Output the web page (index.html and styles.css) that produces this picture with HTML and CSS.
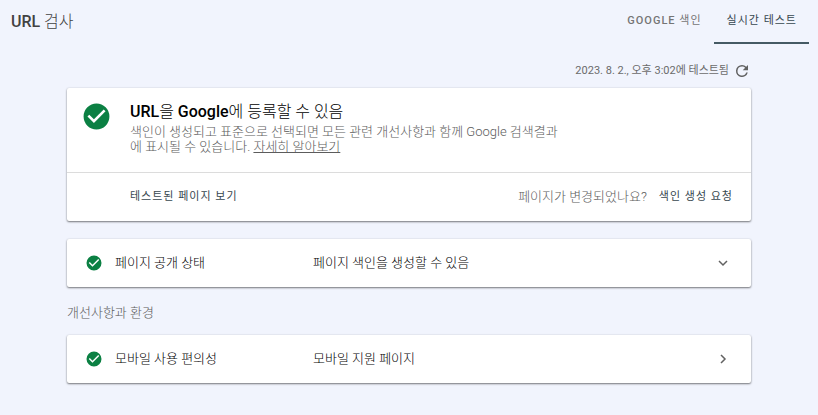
FILE: index.html
```html
<!DOCTYPE html>
<html lang="ko">
<head>
<meta charset="utf-8">
<title>URL 검사</title>
<link rel="stylesheet" href="styles.css">
</head>
<body>
<header class="topbar">
  <h1 class="page-title"><b class="latin">URL</b> 검사</h1>
  <nav class="tabs">
    <a class="tab" href="#index"><b class="latin">GOOGLE</b> 색인</a>
    <a class="tab tab-active" href="#live" aria-current="page">실시간 테스트</a>
  </nav>
</header>
<main class="content">
  <div class="tested">
    <span>2023. 8. 2., 오후 3:02에 테스트됨</span>
    <button class="icon-button" type="button" aria-label="다시 테스트">
      <svg class="refresh" viewBox="0 0 24 24"><path d="M17.65 6.35A7.96 7.96 0 0 0 12 4a8 8 0 1 0 7.73 10h-2.08A6 6 0 1 1 12 6c1.66 0 3.14.69 4.22 1.78L13 11h7V4z"/></svg>
    </button>
  </div>
  <section class="card">
    <div class="verdict">
      <svg class="check check-large" viewBox="0 0 24 24"><path d="M12 2a10 10 0 1 0 0 20 10 10 0 0 0 0-20zm-2 15-5-5 1.410-1.410L10 14.170l7.590-7.590L19 8z"/></svg>
      <div class="verdict-text">
        <h2 class="verdict-title"><b class="latin">URL</b>을 <b class="latin">Google</b>에 등록할 수 있음</h2>
        <p class="verdict-detail">색인이 생성되고 표준으로 선택되면 모든 관련 개선사항과 함께 Google 검색결과에 표시될 수 있습니다. <a class="more" href="#more">자세히 알아보기</a></p>
      </div>
    </div>
    <div class="actions">
      <button class="action" type="button">테스트된 페이지 보기</button>
      <span class="question">페이지가 변경되었나요?</span>
      <button class="action" type="button">색인 생성 요청</button>
    </div>
  </section>
  <button class="card row" type="button" aria-expanded="false">
    <svg class="check" viewBox="0 0 24 24"><path d="M12 2a10 10 0 1 0 0 20 10 10 0 0 0 0-20zm-2 15-5-5 1.410-1.410L10 14.170l7.590-7.590L19 8z"/></svg>
    <span class="row-name">페이지 공개 상태</span>
    <span class="row-value">페이지 색인을 생성할 수 있음</span>
    <svg class="chevron" viewBox="0 0 16 16"><path d="M4 6l4 4 4-4"/></svg>
  </button>
  <h3 class="group-title">개선사항과 환경</h3>
  <button class="card row" type="button">
    <svg class="check" viewBox="0 0 24 24"><path d="M12 2a10 10 0 1 0 0 20 10 10 0 0 0 0-20zm-2 15-5-5 1.410-1.410L10 14.170l7.590-7.590L19 8z"/></svg>
    <span class="row-name">모바일 사용 편의성</span>
    <span class="row-value">모바일 지원 페이지</span>
    <svg class="chevron" viewBox="0 0 16 16"><path d="M6 4l4 4-4 4"/></svg>
  </button>
</main>
</body>
</html>
```
FILE: styles.css
```css
* {
  box-sizing: border-box;
}

body {
  margin: 0;
  background: #f1f4fd;
  color: #000;
  font-family: Roboto, "Noto Sans CJK KR", sans-serif;
  font-size: 13px;
  font-weight: 300;
  line-height: 16px;
}

h1, h2, h3, p {
  margin: 0;
}

button {
  padding: 0;
  border: 0;
  background: none;
  color: inherit;
  font: inherit;
  text-align: left;
}

.latin {
  font-weight: 500;
}

.topbar {
  display: flex;
  justify-content: space-between;
  height: 44px;
  padding: 0 9px 0 11px;
}

.page-title {
  color: #424242;
  font-size: 16px;
  font-weight: 300;
  line-height: 44px;
}

.tabs {
  display: flex;
}

.tab {
  padding: 0 12px 0 13px;
  border-bottom: 2px solid transparent;
  color: #757575;
  font-size: 11px;
  font-weight: 400;
  letter-spacing: 1px;
  line-height: 42px;
  text-decoration: none;
}

.tab-active {
  border-color: #455a64;
  color: #37474f;
}

.content {
  padding: 18px 67px 24px;
}

.tested {
  display: flex;
  align-items: center;
  justify-content: flex-end;
  gap: 4px;
  height: 18px;
  margin-bottom: 8px;
  color: #6b6b6b;
  font-size: 11px;
  font-weight: 400;
}

.icon-button {
  display: flex;
}

.refresh {
  width: 18px;
  height: 18px;
  fill: #616161;
}

.card {
  width: 100%;
  border-radius: 2px;
  background: #fff;
  box-shadow: 0 1px 2px rgba(0, 0, 0, 0.5), 0 0 2px rgba(0, 0, 0, 0.1);
}

.verdict {
  display: flex;
  gap: 18px;
  padding: 13px 16px 18px 14px;
  border-bottom: 1px solid #dcdcdc;
}

.check {
  flex: none;
  width: 18px;
  height: 18px;
  fill: #0b8043;
}

.check-large {
  width: 31px;
  height: 31px;
}

.verdict-text {
  max-width: 434px;
}

.verdict-title {
  margin-bottom: 1px;
  font-size: 16px;
  font-weight: 300;
  line-height: 22px;
}

.verdict-detail {
  color: #5c5c5c;
  line-height: 15px;
}

.more {
  color: inherit;
}

.actions {
  display: flex;
  align-items: center;
  gap: 12px;
  height: 48px;
  padding: 0 18px 0 63px;
}

.action {
  color: #37474f;
  font-size: 11px;
  font-weight: 400;
  letter-spacing: 1px;
}

.question {
  margin-left: auto;
  color: #5c5c5c;
}

.row {
  display: flex;
  align-items: center;
  height: 48px;
  margin-top: 18px;
  padding: 0 20px 0 18px;
}

.row-name {
  width: 198px;
  margin-left: 12px;
}

.row-value {
  flex: 1;
}

.chevron {
  width: 16px;
  height: 16px;
  fill: none;
  stroke: #616161;
  stroke-width: 1.5;
}

.group-title {
  margin-top: 18px;
  color: #5c5c5c;
  font-size: 13px;
  font-weight: 300;
}

.group-title + .row {
  margin-top: 14px;
}
```
